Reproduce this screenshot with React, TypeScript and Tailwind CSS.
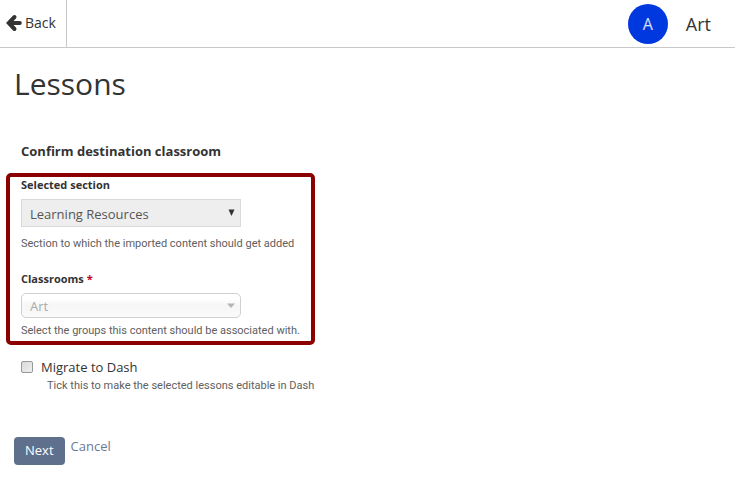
import React from "react";

interface FieldHintProps {
  id: string;
  children: React.ReactNode;
}

const FieldHint: React.FC<FieldHintProps> = ({ id, children }) => (
  <p id={id} className="font-['Roboto','Noto_Sans',sans-serif] text-[11px] leading-[18px] text-[#606060]">
    {children}
  </p>
);

const BackArrow = () => (
  <svg width="16" height="18" viewBox="0 0 16 18" fill="none" stroke="#333" strokeWidth="4" aria-hidden="true">
    <path d="M8.500 3 2.800 9 8.500 15M3.500 9H13.800" strokeLinecap="round" />
  </svg>
);

const App: React.FC = () => {
  const [migrate, setMigrate] = React.useState(false);

  return (
    <div className="bg-white font-['Open_Sans','Noto_Sans',sans-serif] text-[#333]">
      {/* Top bar */}
      <header className="flex h-12 items-stretch justify-between border-b border-[#c8c8c8]">
        <a href="#back" className="flex items-center gap-[3px] border-r border-[#c8c8c8] pr-2.5 pb-0.5 pl-1.5 text-sm">
          <BackArrow />
          Back
        </a>
        <div className="flex items-center pr-6 text-lg">
          <span className="mr-4.5 flex size-10 items-center justify-center rounded-full bg-[#0038e0] text-base text-white/85">
            A
          </span>
          Art
        </div>
      </header>

      <main className="px-3.5 pt-4">
        <h1 className="text-[30px] leading-10">Lessons</h1>

        <form className="mt-[37px]" onSubmit={(e) => e.preventDefault()}>
          <h2 className="pl-[7px] text-[13px] leading-5 font-bold">Confirm destination classroom</h2>

          {/* Destination fields */}
          <div className="-ml-2 mt-3 w-[309px] max-w-full rounded-[5px] border-4 border-[#8b0000] pb-px pl-[11px]">
            <label htmlFor="section" className="block text-[11px] leading-4 font-bold">
              Selected section
            </label>
            <div className="relative mt-1.5 w-[220px]">
              <select
                id="section"
                aria-describedby="section-hint"
                className="block h-7 w-full appearance-none border border-[#d9d9d9] bg-[#eee] px-2 pt-1 text-[13px] text-[#555]"
              >
                <option>Learning Resources</option>
              </select>
              <svg className="pointer-events-none absolute top-2.5 right-1.5" width="7" height="7" viewBox="0 0 7 7">
                <path d="M.500 .500h6L3.500 7z" fill="#333" />
              </svg>
            </div>
            <div className="mt-2">
              <FieldHint id="section-hint">Section to which the imported content should get added</FieldHint>
            </div>

            <label htmlFor="classrooms" className="mt-[18px] block text-[11px] leading-4 font-bold">
              Classrooms <span className="text-[#c00020]">*</span>
            </label>
            <div className="relative mt-1.5 w-[220px]">
              <select
                id="classrooms"
                disabled
                aria-describedby="classrooms-hint"
                className="block h-[25px] w-full appearance-none rounded-[5px] border border-[#d0d0d0] bg-linear-to-b from-white from-20% via-[#f6f6f6] via-50% to-[#fafafa] px-2 pt-0.5 text-[13px] text-[#aaa] opacity-100"
              >
                <option>Art</option>
              </select>
              <svg className="pointer-events-none absolute top-2.5 right-1.5" width="8" height="5" viewBox="0 0 8 5">
                <path d="M0 .500h8L4 5z" fill="#b5b5b5" />
              </svg>
            </div>
            <div className="mt-1">
              <FieldHint id="classrooms-hint">Select the groups this content should be associated with.</FieldHint>
            </div>
          </div>

          {/* Migration option */}
          <div className="mt-3 pl-[7px]">
            <div className="flex items-start">
              <input
                id="migrate"
                type="checkbox"
                checked={migrate}
                onChange={(e) => setMigrate(e.target.checked)}
                aria-describedby="migrate-hint"
                className="mt-1 size-3 appearance-none rounded-[2px] border border-[#999] bg-linear-to-br from-[#d8d8d8] to-[#f0f0f0] checked:bg-none checked:bg-[#5f708d]"
              />
              <label htmlFor="migrate" className="ml-2 text-[13px] leading-5">
                Migrate to Dash
              </label>
            </div>
            <div className="pl-[26px]">
              <FieldHint id="migrate-hint">Tick this to make the selected lessons editable in Dash</FieldHint>
            </div>
          </div>

          <div className="mt-[42px] flex items-start gap-1.5">
            <button type="submit" className="h-7 rounded-sm bg-[#5f708d] px-[11px] text-[13px] text-white">
              Next
            </button>
            <a href="#cancel" className="text-[13px] leading-[18px] text-[#6b7a94]">
              Cancel
            </a>
          </div>
        </form>
      </main>
    </div>
  );
};

export default App;
